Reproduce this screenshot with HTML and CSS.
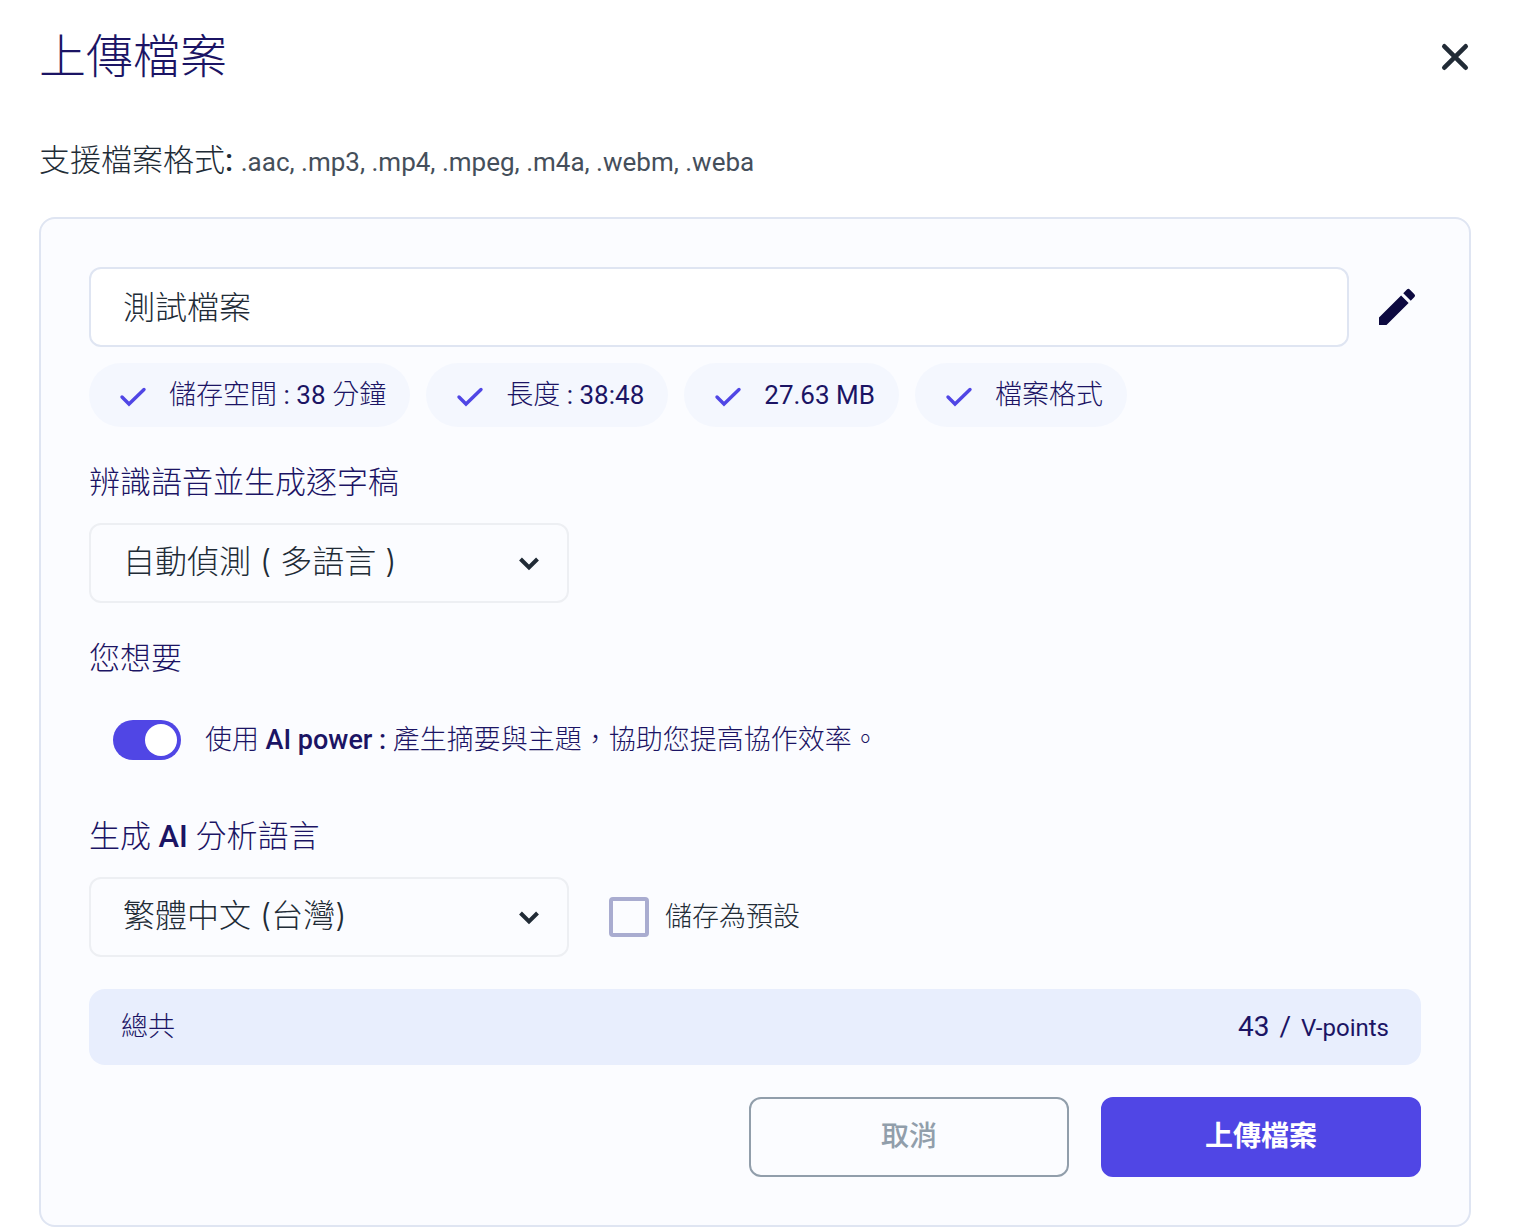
FILE: index.html
```html
<!DOCTYPE html>
<html lang="zh-Hant">
<head>
  <meta charset="UTF-8">
  <meta name="viewport" content="width=device-width, initial-scale=1.0">
  <title>上傳檔案</title>
  <link rel="stylesheet" href="styles.css">
</head>
<body>
  <main class="upload-dialog">
    <header class="dialog-header">
      <h1>上傳檔案</h1>
      <button type="button" class="close-button" aria-label="關閉">
        <svg viewBox="0 0 32 32" width="32" height="32" fill="none" stroke="currentColor" stroke-width="4.6" stroke-linecap="round"><path d="M5.3 5.3l21.4 21.4M26.7 5.3L5.3 26.7"/></svg>
      </button>
    </header>
    <p class="formats">支援檔案格式<span class="colon">:</span> <span class="format-list">.aac, .mp3, .mp4, .mpeg, .m4a, .webm, .weba</span></p>

    <form class="upload-card">
      <div class="name-row">
        <input type="text" class="file-name" name="filename" value="測試檔案" aria-label="檔案名稱">
        <button type="button" class="edit-button" aria-label="編輯">
          <svg viewBox="0 0 24 24" width="48" height="48" fill="currentColor"><path d="M3 17.25V21h3.75L17.81 9.94l-3.75-3.75L3 17.25zM20.71 7.04a.996.996 0 0 0 0-1.41l-2.34-2.34a.996.996 0 0 0-1.41 0l-1.83 1.83 3.75 3.75 1.83-1.83z"/></svg>
        </button>
      </div>

      <ul class="checks">
        <li>
          <svg class="check-icon" viewBox="0 0 40 40"><path d="M9 22l7 7L31 14.500"/></svg>
          <span>儲存空間 <span class="latin">: 38</span> 分鐘</span>
        </li>
        <li>
          <svg class="check-icon" viewBox="0 0 40 40"><path d="M9 22l7 7L31 14.500"/></svg>
          <span>長度 <span class="latin">: 38:48</span></span>
        </li>
        <li>
          <svg class="check-icon" viewBox="0 0 40 40"><path d="M9 22l7 7L31 14.500"/></svg>
          <span class="latin">27.63 MB</span>
        </li>
        <li>
          <svg class="check-icon" viewBox="0 0 40 40"><path d="M9 22l7 7L31 14.500"/></svg>
          <span>檔案格式</span>
        </li>
      </ul>

      <label class="section-label" for="speechLanguage">辨識語音並生成逐字稿</label>
      <div class="select-box">
        <select id="speechLanguage" name="speechLanguage">
          <option>自動偵測 ( 多語言 )</option>
        </select>
        <svg class="chevron" viewBox="0 0 24 24"><path d="M3.500 8l8.500 8.500L20.500 8"/></svg>
      </div>

      <h2 class="section-label">您想要</h2>
      <div class="toggle-row">
        <input type="checkbox" class="toggle" id="aiPower" role="switch" checked>
        <label for="aiPower">使用 <span class="strong">AI power :</span> 產生摘要與主題，協助您提高協作效率。</label>
      </div>

      <label class="section-label" for="analysisLanguage">生成 <span class="strong">AI</span> 分析語言</label>
      <div class="language-row">
        <div class="select-box">
          <select id="analysisLanguage" name="analysisLanguage">
            <option>繁體中文 (台灣)</option>
          </select>
          <svg class="chevron" viewBox="0 0 24 24"><path d="M3.500 8l8.500 8.500L20.500 8"/></svg>
        </div>
        <input type="checkbox" class="save-default" id="saveDefault">
        <label for="saveDefault">儲存為預設</label>
      </div>

      <div class="total">
        <span>總共</span>
        <span class="points"><span class="amount">43</span> <span class="amount">/</span> <span>V-points</span></span>
      </div>

      <div class="actions">
        <button type="button" class="button cancel">取消</button>
        <button type="submit" class="button submit">上傳檔案</button>
      </div>
    </form>
  </main>
</body>
</html>
```

FILE: styles.css
```css
* {
  box-sizing: border-box;
}
body {
  margin: 0;
  background: #fff;
  color: #1b1464;
  font-family: Roboto, "Noto Sans CJK TC", sans-serif;
  font-size: 27px;
  font-weight: 300;
  line-height: 40px;
}
button,
input,
select {
  font: inherit;
  color: inherit;
  margin: 0;
}
svg {
  display: block;
}
.upload-dialog {
  padding: 25px 42px 3px 39px;
}
.dialog-header {
  display: flex;
  justify-content: space-between;
  align-items: center;
}
.dialog-header h1 {
  margin: 0;
  font-size: 47px;
  font-weight: 300;
  line-height: 64px;
}
.close-button,
.edit-button {
  padding: 0;
  border: none;
  background: none;
  cursor: pointer;
}
.close-button {
  color: #212b36;
}
.edit-button {
  color: #0d0a40;
}
.formats {
  margin: 48px 0 31px;
  color: #212b36;
  font-size: 31px;
  line-height: 48px;
}
.formats .colon {
  font-weight: 500;
}
.format-list {
  color: #454f5b;
  font-size: 26px;
  font-weight: 400;
}
.upload-card {
  padding: 48px;
  border: 2px solid #dfe5f2;
  border-radius: 16px;
  background: #fbfcff;
}
.name-row {
  display: flex;
  align-items: center;
  gap: 24px;
}
.file-name {
  flex: 1;
  min-width: 0;
  height: 80px;
  padding: 0 32px 4px;
  border: 2px solid #dfe5f2;
  border-radius: 12px;
  background: #fff;
  color: #212b36;
  font-size: 32px;
}
.checks {
  display: flex;
  flex-wrap: wrap;
  gap: 16px;
  margin: 16px 0 32px;
  padding: 0;
  list-style: none;
}
.checks li {
  display: flex;
  align-items: center;
  gap: 16px;
  height: 64px;
  padding: 0 24px;
  border-radius: 32px;
  background: #f4f7fe;
}
.check-icon {
  width: 40px;
  height: 40px;
  fill: none;
  stroke: #5046e5;
  stroke-width: 3.4;
  stroke-linecap: round;
}
.latin {
  font-size: 26px;
  font-weight: 400;
}
.strong {
  font-weight: 500;
}
.section-label {
  display: block;
  margin: 32px 0 16px;
  font-size: 31px;
  font-weight: 300;
  line-height: 48px;
}
.select-box {
  position: relative;
  width: 480px;
  max-width: 100%;
}
.select-box select {
  appearance: none;
  width: 100%;
  height: 80px;
  padding: 0 72px 2px 32px;
  border: 2px solid #edeff3;
  border-radius: 12px;
  background: #fbfcff;
  color: #212b36;
  font-family: Inter, "Noto Sans CJK TC", sans-serif;
  font-size: 32px;
}
.chevron {
  position: absolute;
  top: 28px;
  right: 28px;
  width: 24px;
  height: 24px;
  fill: none;
  stroke: #212b36;
  stroke-width: 4;
  pointer-events: none;
}
.toggle-row {
  display: flex;
  align-items: center;
  gap: 24px;
  min-height: 82px;
  padding-left: 24px;
}
.toggle {
  appearance: none;
  width: 68px;
  height: 40px;
  padding: 4px;
  border-radius: 20px;
  background: #5046e5;
}
.toggle::before {
  content: "";
  display: block;
  width: 32px;
  height: 32px;
  border-radius: 50%;
  background: #fff;
}
.toggle:checked::before {
  margin-left: auto;
}
.language-row {
  display: flex;
  align-items: center;
  color: #212b36;
}
.save-default {
  appearance: none;
  width: 40px;
  height: 40px;
  margin: 0 16px 0 40px;
  border: 4px solid #a9acd0;
  border-radius: 4px;
}
.save-default:checked {
  background: #5046e5;
}
.total {
  display: flex;
  justify-content: space-between;
  align-items: center;
  height: 76px;
  margin: 32px 0;
  padding: 0 32px;
  border-radius: 16px;
  background: #e8eefd;
}
.points {
  font-size: 24px;
  font-weight: 400;
}
.amount {
  margin-right: 4px;
  font-size: 28px;
}
.actions {
  display: flex;
  justify-content: flex-end;
  gap: 32px;
}
.button {
  width: 320px;
  height: 80px;
  padding: 0;
  border: 2px solid #919eab;
  border-radius: 12px;
  background: transparent;
  color: #919eab;
  font-size: 28px;
  font-weight: 500;
  cursor: pointer;
}
.submit {
  border-color: #5046e5;
  background: #5046e5;
  color: #fff;
  font-weight: 700;
}
```
